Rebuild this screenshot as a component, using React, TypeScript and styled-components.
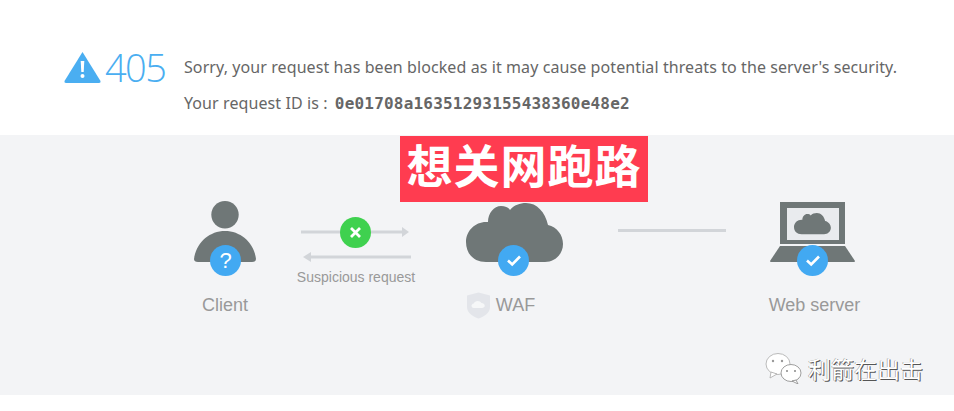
import React from "react";
import styled, { createGlobalStyle } from "styled-components";

const Global = createGlobalStyle`
  html, body { margin: 0; padding: 0; background: #fff; }
  body { width: 954px; height: 411px; overflow: hidden; font-family: "Liberation Sans", Arial, sans-serif; }
`;
const Page = styled.div`
  position: relative;
  width: 954px;
  height: 411px;
  background: #fff;
`;
const Header = styled.header`
  height: 135px;
  box-sizing: border-box;
  padding: 47px 0 0 64px;
  display: flex;
  align-items: flex-start;
  background: #fff;
`;
const Status = styled.div`
  display: flex;
  align-items: center;
  width: 120px;
  height: 40px;
  gap: 4px;
`;
const Code = styled.span`
  font-family: "Open Sans", sans-serif;
  font-weight: 300;
  font-size: 38px;
  line-height: 40px;
  letter-spacing: -1.6px;
  color: #4aaef1;
`;
const Messages = styled.div`
  display: flex;
  flex-direction: column;
  gap: 16px;
  padding-top: 10px;
  font-family: "Noto Sans", sans-serif;
  font-size: 16px;
  letter-spacing: 0.09px;
  line-height: 20px;
  color: #666;
  white-space: nowrap;
`;
const RequestId = styled.strong`
  margin-left: 3px;
  font-family: "DejaVu Sans Mono", monospace;
  font-size: 16px;
  letter-spacing: 0.2px;
  font-weight: 700;
`;
const Diagram = styled.section`
  position: relative;
  height: 260px;
  background: #f3f4f6;
  display: flex;
  align-items: flex-start;
  box-sizing: border-box;
  padding-top: 66px;
`;
const Node = styled.div<{ $w: number; $ml: number }>`
  width: ${(p) => p.$w}px;
  margin-left: ${(p) => p.$ml}px;
  display: flex;
  flex-direction: column;
  align-items: center;
`;
const IconWrap = styled.div`
  position: relative;
  width: 100%;
  height: 76px;
`;
const Label = styled.div<{ $shift?: number }>`
  margin-top: 17px;
  margin-left: ${(p) => p.$shift ?? 0}px;
  height: 22px;
  display: flex;
  align-items: center;
  gap: 6px;
  font-size: 18px;
  line-height: 22px;
  color: #999;
  white-space: nowrap;
`;
const Badge = styled.div<{ $c: string; $x: number; $y: number }>`
  position: absolute;
  left: ${(p) => p.$x}px;
  top: ${(p) => p.$y}px;
  width: 31px;
  height: 31px;
  border-radius: 50%;
  background: ${(p) => p.$c};
  color: #fff;
  display: flex;
  align-items: center;
  justify-content: center;
  font-size: 22px;
  line-height: 31px;
`;
const Connector = styled.div<{ $w: number; $ml: number }>`
  width: ${(p) => p.$w}px;
  margin-left: ${(p) => p.$ml}px;
  position: relative;
  display: flex;
  flex-direction: column;
  align-items: center;
`;
const Caption = styled.div`
  font-size: 14px;
  line-height: 16px;
  color: #999;
  white-space: nowrap;
  margin-top: 1px;
`;
const Arrows = styled.svg`
  display: block;
  width: 118px;
  height: 44px;
  margin-top: 23px;
`;
const Plain = styled.div`
  width: 108px;
  height: 3px;
  margin-top: 28px;
  margin-left: 55px;
  background: #d2d5d9;
`;
const Banner = styled.div`
  position: absolute;
  left: 400px;
  top: 136px;
  width: 248px;
  height: 66px;
  box-sizing: border-box;
  padding-bottom: 11px;
  background: #ff3c50;
  color: #fff;
  display: flex;
  align-items: center;
  justify-content: center;
  font-family: "Noto Sans CJK SC", sans-serif;
  font-weight: 700;
  font-size: 46px;
  letter-spacing: 1px;
  line-height: 55px;
  white-space: nowrap;
`;
const Watermark = styled.div`
  position: absolute;
  left: 765px;
  top: 352px;
  display: flex;
  align-items: center;
  gap: 6px;
  font-family: "Noto Sans CJK SC", sans-serif;
  font-size: 23px;
  line-height: 30px;
  color: #fff;
  text-shadow: 1px 1px 0 #555, -0.5px 0 0 #888;
  white-space: nowrap;
`;

const Check = () => (
  <svg width="16" height="13" viewBox="0 0 16 13">
    <path d="M2 6.5 L6.2 10.5 L14 2.5" fill="none" stroke="#fff" strokeWidth="2.6" />
  </svg>
);

const CLOUD =
  "M20 59 C8 59 0 51 0 39 C0 28 9 19 20 19 L22 19 C22 10 28 3 35 3 C39 3 42 4 44 7 C48 2 54 0 60 0 C71 0 79 9 82 22 C91 24 97 32 97 41 C97 51 89 59 79 59 Z";

export default function App() {
  return (
    <Page>
      <Global />
      <Header>
        <Status>
          <svg width="37" height="32" viewBox="0 0 37 32">
            <path d="M18.5 1 L36.5 30 Q37 32 35 32 L2 32 Q0 32 .5 30 Z" fill="#4aaef1" />
            <path d="M16.7 10 h3.6 l-.6 11 h-2.4 Z" fill="#fff" />
            <circle cx="18.5" cy="25" r="2" fill="#fff" />
          </svg>
          <Code>405</Code>
        </Status>
        <Messages>
          <div>Sorry, your request has been blocked as it may cause potential threats to the server's security.</div>
          <div>
            Your request ID is : <RequestId>0e01708a16351293155438360e48e2</RequestId>
          </div>
        </Messages>
      </Header>
      <Diagram>
        <Node $w={62} $ml={194}>
          <IconWrap>
            <svg width="62" height="62" viewBox="0 0 62 62">
              <circle cx="31" cy="13.7" r="13.700" fill="#6f7777" />
              <path d="M0 58 C2 42 15 30 31 30 C47 30 60 42 62 58 Q62 61 58 61 L4 61 Q0 61 0 58 Z" fill="#6f7777" />
            </svg>
            <Badge $c="#42a9f2" $x={16} $y={44}>?</Badge>
          </IconWrap>
          <Label>Client</Label>
        </Node>
        <Connector $w={118} $ml={41}>
          <Arrows viewBox="0 0 118 44">
            <rect x="4" y="6.500" width="101" height="3" fill="#d2d5d9" />
            <path d="M105 3 L112 8 L105 13 Z" fill="#d2d5d9" />
            <rect x="14" y="31.500" width="100" height="3" fill="#d2d5d9" />
            <path d="M14 28 L6 33 L14 38 Z" fill="#d2d5d9" />
          </Arrows>
          <Caption>Suspicious request</Caption>
          <Badge $c="#3fd14f" $x={43} $y={16}>
            <svg width="13" height="13" viewBox="0 0 13 13">
              <path d="M2 2 L11 11 M11 2 L2 11" stroke="#fff" strokeWidth="2.8" />
            </svg>
          </Badge>
        </Connector>
        <Node $w={97} $ml={51}>
          <IconWrap>
            <svg width="97" height="62" viewBox="0 -2 97 62" style={{ display: "block" }}>
              <path d={CLOUD} fill="#6f7777" />
            </svg>
            <Badge $c="#42a9f2" $x={32} $y={44}><Check /></Badge>
          </IconWrap>
          <Label $shift={-27}>
            <svg width="23" height="27" viewBox="0 0 24 27">
              <path d="M12 0 L24 3 V15 C24 21 18 25 12 27 C6 25 0 21 0 15 V3 Z" fill="#e3e5ea" />
              <path d="M7 16 C4 16 4 12 7 11.500 C8 8 14 8 15 11 C19 11 20 16 16 16 Z" fill="#f6f7f8" />
            </svg>
            WAF
          </Label>
        </Node>
        <Plain />
        <Node $w={85} $ml={44}>
          <IconWrap>
            <svg width="85" height="62" viewBox="0 0 85 62" style={{ display: "block" }}>
              <path d="M10 1 H75 V43 H10 Z" fill="#6f7777" />
              <rect x="17" y="7" width="52" height="32" fill="#e9ebee" />
              <path d={CLOUD} fill="#6f7777" transform="translate(24,12) scale(.38,.36)" />
              <path d="M10 45 H75 L85 60 Q85 61 84 61 H1 Q0 61 0 60 Z" fill="#6f7777" />
            </svg>
            <Badge $c="#42a9f2" $x={27} $y={44}><Check /></Badge>
          </IconWrap>
          <Label $shift={4}>Web server</Label>
        </Node>
      </Diagram>
      <Banner>想关网跑路</Banner>
      <Watermark>
        <svg width="37" height="32" viewBox="0 0 37 32">
          <ellipse cx="13" cy="12" rx="12" ry="10.500" fill="#fff" stroke="#aaa" strokeWidth="0.8" />
          <path d="M6 20 L5 26 L12 22 Z" fill="#fff" stroke="#aaa" strokeWidth="0.8" />
          <ellipse cx="26" cy="21" rx="10" ry="8.500" fill="#fff" stroke="#888" strokeWidth="0.8" />
          <path d="M31 28 L33 32 L27 29 Z" fill="#fff" stroke="#888" strokeWidth="0.8" />
          <circle cx="8" cy="9" r="1.200" fill="#999" />
          <circle cx="17" cy="9" r="1.200" fill="#999" />
          <circle cx="22" cy="19" r="1" fill="#888" />
          <circle cx="30" cy="19" r="1" fill="#888" />
        </svg>
        利箭在出击
      </Watermark>
    </Page>
  );
}
